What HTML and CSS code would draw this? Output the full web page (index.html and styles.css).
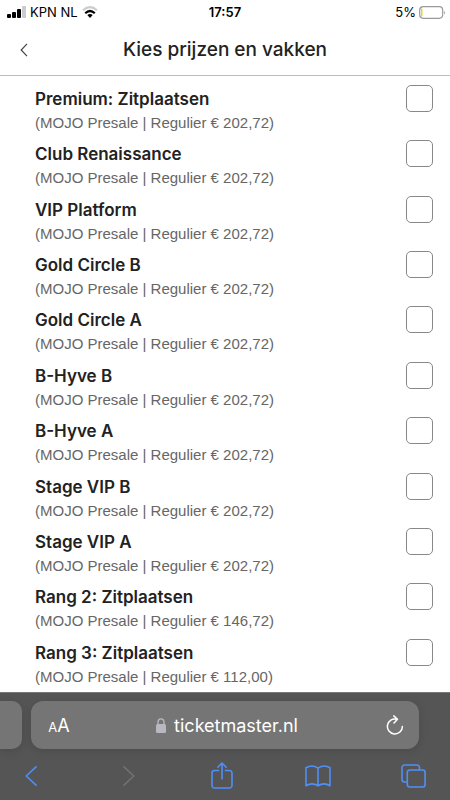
FILE: index.html
```html
<!DOCTYPE html>
<html lang="nl">
<head>
<meta charset="utf-8">
<meta name="viewport" content="width=device-width, initial-scale=1">
<title>Kies prijzen en vakken</title>
<link rel="stylesheet" href="styles.css">
</head>
<body>
<div class="status">
  <div class="carrier">
    <svg width="19" height="12" viewBox="0 0 19 12" aria-hidden="true"><rect x="0" y="8" width="4" height="4" rx="1"/><rect x="5" y="6" width="4" height="6" rx="1"/><rect x="10" y="3" width="4" height="9" rx="1"/><rect x="15" y="0" width="4" height="12" rx="1" fill="#ccc"/></svg>
    <span>KPN NL</span>
    <svg width="16" height="12" viewBox="0 0 16 12" fill="none" stroke="#000" stroke-width="2.2" aria-hidden="true"><path d="M1 4.3Q8-2 15 4.3" stroke="#ccc"/><path d="M3.2 7.2Q8 2.8 12.8 7.2"/><path d="M5.3 9.1Q8 6.8 10.7 9.1L8 12Z" fill="#000" stroke="none"/></svg>
  </div>
  <time>17:57</time>
  <div class="power">
    <span>5%</span>
    <svg width="27" height="13" viewBox="0 0 27 13" aria-hidden="true"><rect x=".7" y=".7" width="23" height="11.6" rx="3.5" fill="none" stroke="#999" stroke-width="1.2"/><rect x="2" y="2.5" width="1.4" height="8" rx=".7" fill="#fc0"/><path d="M25.2 4.5q1.7 2 0 4z" fill="#999"/></svg>
  </div>
</div>
<header class="header">
  <button class="back" aria-label="Terug"><svg width="8" height="14" viewBox="0 0 8 14" fill="none" stroke="#444" stroke-width="1.2"><path d="M7 .8 1.2 7 7 13.2"/></svg></button>
  <h1>Kies prijzen en vakken</h1>
</header>
<main class="list">
  <label class="row"><span class="name">Premium: Zitplaatsen</span><input type="checkbox"><span class="price">(MOJO Presale | Regulier € 202,72)</span></label>
  <label class="row"><span class="name">Club Renaissance</span><input type="checkbox"><span class="price">(MOJO Presale | Regulier € 202,72)</span></label>
  <label class="row"><span class="name">VIP Platform</span><input type="checkbox"><span class="price">(MOJO Presale | Regulier € 202,72)</span></label>
  <label class="row"><span class="name">Gold Circle B</span><input type="checkbox"><span class="price">(MOJO Presale | Regulier € 202,72)</span></label>
  <label class="row"><span class="name">Gold Circle A</span><input type="checkbox"><span class="price">(MOJO Presale | Regulier € 202,72)</span></label>
  <label class="row"><span class="name">B-Hyve B</span><input type="checkbox"><span class="price">(MOJO Presale | Regulier € 202,72)</span></label>
  <label class="row"><span class="name">B-Hyve A</span><input type="checkbox"><span class="price">(MOJO Presale | Regulier € 202,72)</span></label>
  <label class="row"><span class="name">Stage VIP B</span><input type="checkbox"><span class="price">(MOJO Presale | Regulier € 202,72)</span></label>
  <label class="row"><span class="name">Stage VIP A</span><input type="checkbox"><span class="price">(MOJO Presale | Regulier € 202,72)</span></label>
  <label class="row"><span class="name">Rang 2: Zitplaatsen</span><input type="checkbox"><span class="price">(MOJO Presale | Regulier € 146,72)</span></label>
  <label class="row"><span class="name">Rang 3: Zitplaatsen</span><input type="checkbox"><span class="price">(MOJO Presale | Regulier € 112,00)</span></label>
</main>
<footer class="browser">
  <div class="tabs">
    <div class="previous"></div>
    <div class="address">
      <button class="size" aria-label="Tekstgrootte"><small>A</small>A</button>
      <div class="site">
        <svg width="10" height="15" viewBox="0 0 10 15" aria-hidden="true"><rect y="6" width="10" height="9" rx="1.5" fill="#b9b8bf"/><path d="M2 7V4a3 3.2 0 0 1 6 0v3" fill="none" stroke="#b9b8bf" stroke-width="1.3"/></svg>
        <span>ticketmaster.nl</span>
      </div>
      <button class="reload" aria-label="Vernieuwen"><svg width="18" height="20" viewBox="0 0 18 20" fill="none" stroke="#fff" stroke-width="1.5" stroke-linecap="round" stroke-linejoin="round"><path d="M10.8 4.2A7.5 7.5 0 1 0 16.4 11.5M7.8 .9 11.5 4.3 8 8"/></svg></button>
    </div>
    <div class="next"></div>
  </div>
  <nav class="tools">
    <button aria-label="Vorige"><svg width="12" height="20" viewBox="0 0 12 20"><path d="M11 .8 1.2 10 11 19.2"/></svg></button>
    <button class="off" aria-label="Volgende" disabled><svg width="16" height="20" viewBox="0 0 16 20"><path d="M5 .8 14.8 10 5 19.2"/></svg></button>
    <button aria-label="Deel"><svg width="22" height="27" viewBox="0 0 22 27"><path d="M7.5 8.5H3.5a2.5 2.5 0 0 0-2.5 2.5v12.5A2.5 2.5 0 0 0 3.5 26h15a2.5 2.5 0 0 0 2.5-2.5V11a2.5 2.5 0 0 0-2.5-2.5h-4M11 17V1.2M6.8 5.2 11 1l4.2 4.2"/></svg></button>
    <button aria-label="Bladwijzers"><svg width="26" height="22" viewBox="0 0 26 22"><path d="M13 3.2V20.5M13 3.2Q7-1 1 2.8V20.8Q7 17 13 20.8Q19 17 25 20.8V2.8Q19-1 13 3.2Z"/></svg></button>
    <button aria-label="Tabbladen"><svg width="25" height="24" viewBox="0 0 25 24"><rect x="6.3" y="6" width="17.8" height="17" rx="2.5"/><path d="M6 18H3.5A2.5 2.5 0 0 1 1 15.5V3.5A2.5 2.5 0 0 1 3.5 1H16a2.5 2.5 0 0 1 2.5 2.5V5.5"/></svg></button>
  </nav>
</footer>
</body>
</html>
```
FILE: styles.css
```css
* { box-sizing: border-box; }
body {
  margin: 0;
  min-height: 100vh;
  display: flex;
  flex-direction: column;
  background: #fff;
  color: #222;
  font-family: Inter, "Liberation Sans", sans-serif;
}
button {
  padding: 0;
  border: 0;
  background: none;
  color: inherit;
  font: inherit;
}
svg { display: block; }
.status {
  display: grid;
  grid-template-columns: 1fr auto 1fr;
  align-items: center;
  height: 24px;
  padding: 0 7px;
  color: #000;
  font-size: 13px;
}
.status time { font-weight: 600; }
.carrier, .power {
  display: flex;
  align-items: center;
  gap: 4px;
}
.power {
  justify-content: flex-end;
  gap: 3px;
  margin-right: -3px;
}
.header {
  display: grid;
  grid-template-columns: 48px 1fr 48px;
  align-items: center;
  height: 52px;
  border-bottom: 1px solid #bbb;
}
.back { justify-self: center; }
.header h1 {
  margin: 0;
  text-align: center;
  font-size: 19px;
  font-weight: 500;
}
.list {
  flex: 1;
  display: flex;
  flex-direction: column;
  padding: 7px 17px 0 35px;
}
.row {
  flex: 1;
  display: grid;
  grid-template-columns: 1fr 27px;
  grid-template-rows: 24px 24px;
  padding-top: 4px;
}
.name {
  font-size: 17px;
  line-height: 24px;
  font-weight: 600;
}
.price {
  color: #666;
  font-family: "Liberation Sans", Arial, sans-serif;
  font-size: 15px;
  line-height: 24px;
}
.row input {
  appearance: none;
  width: 27px;
  height: 27px;
  margin: -2px 0 0;
  border: 1px solid #888;
  border-radius: 5px;
  background: #fff;
}
.browser {
  background: #555;
  color: #fff;
  border-top: 1px solid #777;
}
.tabs {
  display: flex;
  gap: 9px;
  padding-top: 8px;
}
.previous, .next, .address {
  height: 48px;
  background: #757575;
  box-shadow: 0 2px 10px #0002;
}
.previous {
  width: 22px;
  border-radius: 0 10px 10px 0;
}
.next {
  width: 22px;
  background: none;
  box-shadow: none;
}
.address {
  flex: 1;
  display: grid;
  grid-template-columns: 40px 1fr 40px;
  align-items: center;
  padding: 0 4px 0 8px;
  border-radius: 12px;
}
.size {
  text-align: center;
  font-size: 18px;
}
.size small { font-size: 13px; }
.site {
  display: flex;
  align-items: center;
  justify-content: center;
  gap: 8px;
  font-size: 18px;
}
.reload { justify-self: center; }
.tools {
  display: flex;
  justify-content: space-between;
  align-items: center;
  height: 51px;
  padding: 2px 24px 0 18px;
}
.tools button {
  display: flex;
  justify-content: center;
  width: 26px;
}
.tools svg {
  flex: none;
  fill: none;
  stroke: #4f8ff7;
  stroke-width: 1.6;
  stroke-linejoin: round;
  stroke-linecap: round;
}
.tools .off svg { stroke: #727272; }
```
